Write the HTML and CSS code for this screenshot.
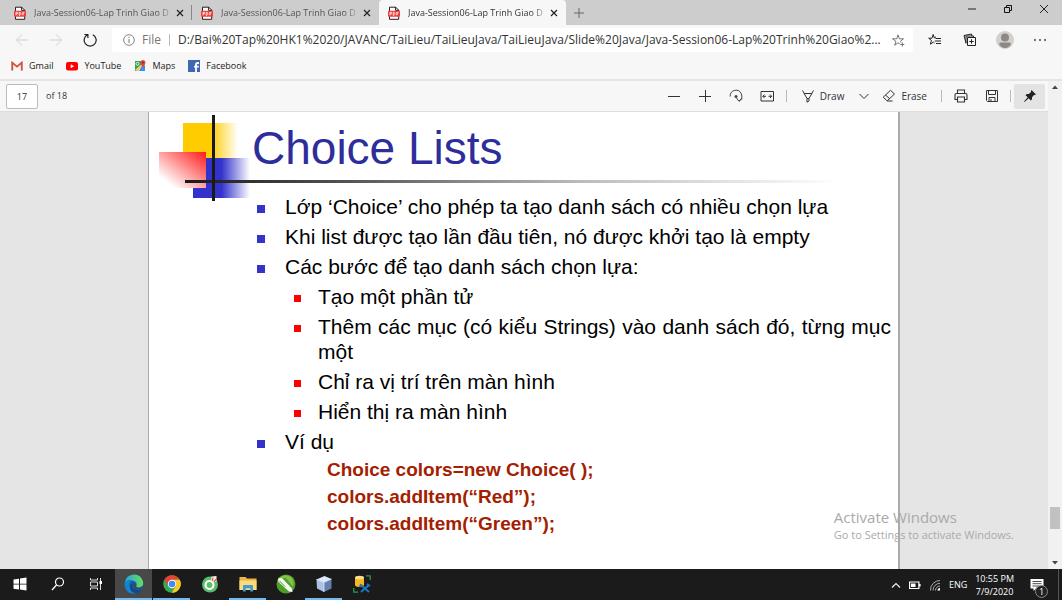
FILE: index.html
```html
<!DOCTYPE html>
<html lang="vi">
<head>
<meta charset="utf-8">
<title>Java-Session06-Lap Trinh Giao D</title>
<link rel="stylesheet" href="styles.css">
</head>
<body>
<svg class="defs" aria-hidden="true">
  <symbol id="pdf" viewBox="0 0 14 14">
    <path d="M2.5 13.3V1.2h6.2l3 3v9.1z" fill="#fff" stroke="#222"/>
    <path d="M8.6 1v3.4H12" fill="none" stroke="#222"/>
    <rect x="1" y="4.8" width="12" height="6" rx="1" fill="#f33b3b"/>
    <path d="M3 9.3v-3h1.4v1.6H3M6.2 6.300v3h.8l.8-.8V7L7 6.300zM9.800 9.300v-3h1.800M9.800 7.900h1.400" fill="none" stroke="#fff" stroke-width=".8"/>
  </symbol>
  <symbol id="close" viewBox="0 0 8 8"><path d="M1 1l6 6M7 1L1 7" fill="none" stroke="currentColor" stroke-width="1.2"/></symbol>
</svg>

<header class="tabstrip">
  <div class="tab"><svg class="i14"><use href="#pdf"/></svg><span class="tab-title">Java-Session06-Lap Trinh Giao D</span><button class="tab-close" aria-label="Close tab"><svg class="i8"><use href="#close"/></svg></button></div>
  <div class="tab"><svg class="i14"><use href="#pdf"/></svg><span class="tab-title">Java-Session06-Lap Trinh Giao D</span><button class="tab-close" aria-label="Close tab"><svg class="i8"><use href="#close"/></svg></button></div>
  <div class="tab active"><svg class="i14"><use href="#pdf"/></svg><span class="tab-title">Java-Session06-Lap Trinh Giao D</span><button class="tab-close" aria-label="Close tab"><svg class="i8"><use href="#close"/></svg></button></div>
  <button class="new-tab" aria-label="New tab"><svg class="i12" viewBox="0 0 12 12"><path d="M6 1v10M1 6h10" stroke="#666"/></svg></button>
  <div class="window-controls">
    <button aria-label="Minimize"><svg class="i10" viewBox="0 0 10 10"><path d="M1 5h8" stroke="#222"/></svg></button>
    <button aria-label="Restore"><svg class="i10" viewBox="0 0 10 10"><path d="M1.500 3.500h5v5h-5zM3.500 3.500v-2h5v5h-2" fill="none" stroke="#111"/></svg></button>
    <button aria-label="Close"><svg class="i10" viewBox="0 0 10 10"><path d="M1 1l8 8M9 1L1 9" stroke="#222"/></svg></button>
  </div>
</header>

<nav class="navbar">
  <button class="nav-btn" aria-label="Back"><svg class="i14" viewBox="0 0 14 14"><path d="M13 7H1.500M7 1.500L1.500 7 7 12.500" fill="none" stroke="#cfcfcf"/></svg></button>
  <button class="nav-btn" aria-label="Forward"><svg class="i14" viewBox="0 0 14 14"><path d="M1 7h11.500M7 1.500L12.500 7 7 12.500" fill="none" stroke="#cfcfcf"/></svg></button>
  <button class="nav-btn" aria-label="Refresh"><svg class="i14" viewBox="0 0 14 14"><path d="M4.500 1.800A6 6 0 1 0 9.800 1.800M4.900 5V1.500H1.400" fill="none" stroke="#222" stroke-width="1.200"/></svg></button>
  <div class="address">
    <svg class="i12" viewBox="0 0 12 12"><circle cx="6" cy="6" r="5.300" fill="none" stroke="#777" stroke-width=".9"/><path d="M6 5v4M6 2.800v1.200" stroke="#777"/></svg>
    <span class="scheme">File</span>
    <input class="url" aria-label="Address" value="D:/Bai%20Tap%20HK1%2020/JAVANC/TaiLieu/TaiLieuJava/TaiLieuJava/Slide%20Java/Java-Session06-Lap%20Trinh%20Giao%2...">
    <button aria-label="Add to favorites"><svg class="i14" viewBox="0 0 14 14"><path d="M8.700 10.800L7 9.800 3.700 12.300 4.900 8.300 1.500 5.800h4.200L7 1.800l1.300 4h4.200L9.500 8.200l.5 1.300M9.300 11.500h4M11.300 9.500v4" fill="none" stroke="#666" stroke-width=".9"/></svg></button>
  </div>
  <div class="nav-right">
    <button aria-label="Favorites"><svg class="i14" viewBox="0 0 14 14"><path d="M8 3.800L6.300 5 5.200 1.500 3.900 5.200H.7l2.700 2.200-1 3.800 3-2.100 1.100.9M7.500 5.500H13M6.800 8H13M8 10.500h5" fill="none" stroke="#222" stroke-width="1"/></svg></button>
    <button aria-label="Collections"><svg class="i14" viewBox="0 0 14 14"><path d="M4.500 4.500h8v8h-8zM8.500 6.300v4.400M6.300 8.500h4.400M3 10L1 2.500 8.500 1l.5 2M3 10.500V3h7.500v1" fill="none" stroke="#222"/></svg></button>
    <button aria-label="Profile"><svg class="i18" viewBox="0 0 18 18"><circle cx="9" cy="9" r="9" fill="#d2cfcc"/><circle cx="9" cy="6.500" r="4" fill="#8c8985"/><path d="M3 13q0-1.500 2-1.500h8q2 0 2 1.500-2 4-6 4t-6-4" fill="#8c8985"/></svg></button>
    <button aria-label="Settings and more"><svg class="i14" viewBox="0 0 14 14"><g fill="#333"><circle cx="2" cy="7" r=".9"/><circle cx="7" cy="7" r=".9"/><circle cx="12" cy="7" r=".9"/></g></svg></button>
  </div>
</nav>

<nav class="bookmarks">
  <a href="#"><svg class="i12" viewBox="0 0 12 12"><path d="M.5 2v8.500H3V2z M9 2v8.500h2.500V2z" fill="#e8e4e2"/><path d="M1.200 10.500V2.600L6 6.600l4.800-4v7.900" fill="none" stroke="#d54b3d" stroke-width="1.700"/></svg>Gmail</a>
  <a href="#"><svg class="i12" viewBox="0 0 12 12"><rect y="2" width="12" height="8.500" rx="2" fill="#f00"/><path d="M4.700 4.300v4l3.400-2z" fill="#fff"/></svg>YouTube</a>
  <a href="#"><svg class="i12" viewBox="0 0 12 12"><path d="M1 1h6l4 5v5H1z" fill="#35a15b"/><path d="M1 10L10 2v3L3 11z" fill="#f7d44c"/><path d="M3 11l4-4 4 4z" fill="#dedede"/><path d="M5 11h6V8L8 6z" fill="#4a8af4"/><circle cx="3.500" cy="3.800" r="1.500" fill="none" stroke="#fff" stroke-width=".8"/><path d="M9 7Q6.400 4.500 6.500 2.500a2.500 2.500 0 0 1 5 0Q11.500 4.500 9 7" fill="#e8453c"/><circle cx="9" cy="2.500" r=".9" fill="#812720"/></svg>Maps</a>
  <a href="#"><svg class="i12" viewBox="0 0 12 12"><rect width="12" height="12" fill="#4267b2"/><path d="M8 12V4.500q0-1.500 1.500-1.500H11M6 6.700h4.700" fill="none" stroke="#fff" stroke-width="1.800"/></svg>Facebook</a>
</nav>

<div class="workspace">
  <div class="viewer">
    <div class="pdfbar">
      <input id="page" class="page-no" value="17" aria-label="Page number"><label for="page">of 18</label>
      <div class="pdf-tools">
        <button class="tool" aria-label="Zoom out"><svg class="i12" viewBox="0 0 12 12"><path d="M0 6.500h12" stroke="#333"/></svg></button>
        <button class="tool" aria-label="Zoom in"><svg class="i12" viewBox="0 0 12 12"><path d="M0 6.500h12M6.500 0v12" stroke="#333"/></svg></button>
        <button class="tool" aria-label="Rotate"><svg class="i14" viewBox="0 0 14 14"><path d="M1.200 7.500A5.800 5.800 0 1 1 10 12M13.300 9.500L10 12.300 7.500 9" fill="none" stroke="#444"/><circle cx="7" cy="7.500" r="1.500" fill="#444"/></svg></button>
        <button class="tool" aria-label="Fit to width"><svg class="i14" viewBox="0 0 14 14"><path d="M1 2.500h12.500v9.500H1zM3 7.300h3M8.500 7.300h3M4.500 5.500L2.800 7.300l1.700 1.700M10 5.500l1.700 1.800L10 9" fill="none" stroke="#333"/></svg></button>
        <span class="sep"></span>
        <button class="labelled draw"><svg class="i14" viewBox="0 0 14 14"><path d="M1.500 1.500L6 9.500v3.700L8 12V9.500l4.500-8M3 4.500h8M6 9.500h2" fill="none" stroke="#333"/></svg>Draw</button>
        <button class="more" aria-label="Draw options"><svg class="i10" viewBox="0 0 10 10"><path d="M.5 3L5 7.500 9.500 3" fill="none" stroke="#333"/></svg></button>
        <button class="labelled"><svg class="i14" viewBox="0 0 14 14"><path d="M4.800 11.500L1.200 8.200 8.500 1.300l4 3.700-7 6.500zM3.500 6L8 10M5 12h5.500" fill="none" stroke="#333"/></svg>Erase</button>
        <span class="sep"></span>
        <button class="tool" aria-label="Print"><svg class="i14" viewBox="0 0 14 14"><path d="M3.500 4.500V1h7v3.500M3.500 10.500H1V6q0-1.500 1.500-1.500h9Q13 4.500 13 6v4.500h-2.500M3.500 8h7v5h-7z" fill="none" stroke="#333" stroke-width="1.100"/></svg></button>
        <button class="tool" aria-label="Save"><svg class="i14" viewBox="0 0 14 14"><path d="M1.500 1.500h11v11h-10l-1-1zM3.500 1.500v4h7v-4M4 12.500v-4h6v4M6 10v2.500" fill="none" stroke="#333"/></svg></button>
        <span class="sep"></span>
        <button class="tool pinned" aria-label="Unpin toolbar"><svg class="i14" viewBox="0 0 14 14"><path d="M8.500 1l4.500 4.500-1.200.6-.8-.1-2 2.200v2L7.800 11.500 5.700 9.300 1.500 13l-.5-.5L4.700 8.300 2.500 6.200 3.800 5h2l2.300-2-.2-1z" fill="#222"/></svg></button>
      </div>
    </div>
    <main class="canvas">
      <article class="slide">
        <header class="slide-head">
          <svg class="slide-art" viewBox="0 0 700 90" aria-hidden="true">
            <defs>
              <linearGradient id="gy"><stop offset=".5" stop-color="#fc0"/><stop offset="1" stop-color="#fc0" stop-opacity="0"/></linearGradient>
              <linearGradient id="gb"><stop offset=".5" stop-color="#33c"/><stop offset="1" stop-color="#33c" stop-opacity="0"/></linearGradient>
              <linearGradient id="gr" gradientUnits="userSpaceOnUse" x1="47" y1="40" x2="18" y2="78"><stop offset="0" stop-color="#ff1a1a"/><stop offset="1" stop-color="#fff"/></linearGradient>
              <linearGradient id="gl"><stop offset="0" stop-color="#1a1a1a"/><stop offset=".25" stop-color="#555"/><stop offset=".6" stop-color="#bbb"/><stop offset="1" stop-color="#fff"/></linearGradient>
            </defs>
            <rect x="24" y="11" width="55" height="36" fill="url(#gy)"/>
            <rect x="34" y="46" width="57" height="40" fill="url(#gb)"/>
            <rect x="0" y="40" width="47" height="36" fill="url(#gr)"/>
            <rect x="26" y="68" width="655" height="3" fill="url(#gl)"/>
            <rect x="53" y="3" width="3" height="86" fill="#1a1a1a"/>
          </svg>
          <h1>Choice Lists</h1>
        </header>
        <ul class="points">
          <li>Lớp ‘Choice’ cho phép ta tạo danh sách có nhiều chọn lựa</li>
          <li>Khi list được tạo lần đầu tiên, nó được khởi tạo là empty</li>
          <li>Các bước để tạo danh sách chọn lựa:
            <ul>
              <li>Tạo một phần tử</li>
              <li>Thêm các mục (có kiểu Strings) vào danh sách đó, từng mục một</li>
              <li>Chỉ ra vị trí trên màn hình</li>
              <li>Hiển thị ra màn hình</li>
            </ul>
          </li>
          <li>Ví dụ
            <div class="code">Choice colors=new Choice( );<br>colors.addItem(“Red”);<br>colors.addItem(“Green”);</div>
          </li>
        </ul>
      </article>
    </main>
  </div>
  <div class="scrollbar">
    <svg class="i8" viewBox="0 0 8 8"><path d="M1 6l3-3.500L7 6z" fill="#444"/></svg>
    <span class="thumb"></span>
    <svg class="i8" viewBox="0 0 8 8"><path d="M1 2l3 3.500L7 2z" fill="#444"/></svg>
  </div>
  <aside class="activate"><strong>Activate Windows</strong><span>Go to Settings to activate Windows.</span></aside>
</div>

<footer class="taskbar">
  <div class="apps">
    <button class="app" aria-label="Start"><svg class="i14" viewBox="0 0 14 14"><path d="M.5 2.500l5.500-.8v5H.5zM7 1.500L13.500.500v6.200H7zM.5 7.500H6v5l-5.500-.8zM7 7.500h6.500v6L7 12.600z" fill="#fff"/></svg></button>
    <button class="app" aria-label="Search"><svg class="i14" viewBox="0 0 14 14"><circle cx="8.500" cy="5" r="4" fill="none" stroke="#fff" stroke-width="1.200"/><path d="M5.500 8L1 13" stroke="#fff" stroke-width="1.300"/></svg></button>
    <button class="app" aria-label="Task view"><svg class="i14" viewBox="0 0 14 14"><path d="M1.500 1v2h7V1M1.500 5h7v4h-7zM1.500 13v-2h7v2M11.500 1v12" fill="none" stroke="#ddd"/><path d="M10.500 4h2.500v3h-2.500z" fill="#fff"/></svg></button>
    <button class="app current running" aria-label="Edge"><svg class="i20" viewBox="0 0 20 20"><defs><linearGradient id="e1" x1="0" x2="1"><stop stop-color="#2aa5e0"/><stop offset="1" stop-color="#67de5a"/></linearGradient></defs><circle cx="10" cy="10" r="9.500" fill="#0f5fb5"/><path d="M.7 9Q2 .8 10 .5q7 0 9 7 1 5-3.500 6-3 .3-3.300-1Q14 8 9 6.500 4 6 .7 9" fill="url(#e1)"/><path d="M.5 10q2-5 7.500-4-4 3-2 7.500 2 4.500 7 5.500-8 2-11-3.500Q.6 13 .5 10" fill="#1384cf"/><path d="M9 9q-2 3 1 6 4 2.300 8-.5-2 4.500-6 5-5-1-6-5-.5-4 3-5.500" fill="#114a8b"/><path d="M9.500 9q-2 3 1.500 5.500 3.500 1.500 7.500-.5 1.500-2-.7-1.200-3.500 1.700-5.800 0-.6-.6.300-1.800 0-1.500-2.800-2" fill="#484848"/></svg></button>
    <button class="app running" aria-label="Chrome"><svg class="i18" viewBox="0 0 18 18"><circle cx="9" cy="9" r="8.800" fill="#36a852"/><path d="M1.300 4.800A8.800 8.800 0 0 1 16.700 4.800H9L5.500 11z" fill="#e54335"/><path d="M9 4.800h7.700A8.800 8.800 0 0 1 8.700 17.800L12.800 11z" fill="#fbc926"/><circle cx="9" cy="9" r="4.200" fill="#fff"/><circle cx="9" cy="9" r="3.300" fill="#4688f1"/></svg></button>
    <button class="app" aria-label="Coc Coc"><svg class="i18" viewBox="0 0 18 18"><circle cx="9" cy="9.500" r="8" fill="#58bd68"/><circle cx="8.500" cy="10" r="4" fill="none" stroke="#fff" stroke-width="2.200"/><circle cx="8.500" cy="10" r="1.800" fill="#58bd68"/><path d="M10 6.500L10.500 1.500l5-.5v5.500L12 8z" fill="#f4f5ef"/><path d="M11.300 6l.7-3.500M12.700 7l2.800-3" stroke="#e8533f" stroke-width="1.200"/></svg></button>
    <button class="app running" aria-label="File Explorer"><svg class="i18" viewBox="0 0 18 18"><path d="M.5 2h6l1.500 1.500h9.500V15H.5z" fill="#e8b64c"/><path d="M.5 5.500h17V15H.5z" fill="#ffda79"/><path d="M4 16.500v-5.500q0-1 1-1h8q1 0 1 1v5.500h-2.700v-3.300H6.700v3.300z" fill="#3b9bdc"/></svg></button>
    <button class="app" aria-label="CorelDRAW"><svg class="i20" viewBox="0 0 20 20"><circle cx="10" cy="10" r="9.500" fill="#4f9e2b"/><path d="M3 4Q9-1 15 3q4 4 2 10L10 4z" fill="#83c244"/><path d="M2 4.500l4-.5 10 10.500.5 3.500-3.500-.5L2.500 8z" fill="#f5f8ef"/><path d="M3.500 7L9 12.500" stroke="#4e9529" stroke-width="1"/></svg></button>
    <button class="app running" aria-label="NetBeans"><svg class="i18" viewBox="0 0 18 18"><path d="M1.500 4.500L9.500 1l7 3-7.500 3.500z" fill="#dce9fa"/><path d="M1.500 4.500L9 7.500V17l-7-3.500z" fill="#a8c1e6"/><path d="M9 7.500L16.500 4v9.500L9 17z" fill="#637fac"/><path d="M1.500 4.500L9 7.500l7.500-3.500M9 7.500V17" fill="none" stroke="#eef5ff" stroke-width=".7"/></svg></button>
    <button class="app" aria-label="Database tools"><svg class="i18" viewBox="0 0 18 18"><path d="M2 2.500v8q3.500 3 9 0v-8z" fill="#f7b526"/><ellipse cx="6.500" cy="2.500" rx="4.500" ry="1.800" fill="#ffe28a"/><path d="M13 .8h4.200V5M.8 13v4.200H5" fill="none" stroke="#2b9a48" stroke-width="1.300"/><path d="M8 10l8 7M16 10l-8 7M14 9l3 2M8 9l-1 3" stroke="#1c76bd" stroke-width="2"/></svg></button>
  </div>
  <div class="tray">
    <svg class="i10" viewBox="0 0 10 10"><path d="M1 7.500l4-4 4 4" fill="none" stroke="#eee" stroke-width="1.200"/></svg>
    <svg class="i12" viewBox="0 0 12 12"><path d="M.6 3h9.300v6.500H.6zM11 5v2.500" fill="none" stroke="#fff" stroke-width="1.200"/><path d="M2 4.500h4.500V8H2z" fill="#fff"/></svg>
    <svg class="i12" viewBox="0 0 12 12"><path d="M1.500 11.500A9.500 9.500 0 0 1 11 1.500M4 11.500A7 7 0 0 1 11 4.300M6.500 11.500A4.500 4.500 0 0 1 11 7" fill="none" stroke="#aaa"/><path d="M8.500 11.500A2.500 2.500 0 0 1 11 9v2.500z" fill="#fff"/></svg>
    <span>ENG</span>
    <time class="clock"><span>10:55 PM</span><span>7/9/2020</span></time>
    <button class="notes" aria-label="1 notification"><svg class="i14" viewBox="0 0 14 14"><path d="M.5 1h13v9.500H6L3.500 13v-2.500h-3z" fill="#fff"/><path d="M2.500 3.500h9M2.500 5.700h9M2.500 8H9" stroke="#333" stroke-width=".9"/></svg><span class="badge">1</span></button>
  </div>
</footer>
</body>
</html>
```
FILE: styles.css
```css
* { box-sizing: border-box; }
body {
  margin: 0;
  height: 100vh;
  display: flex;
  flex-direction: column;
  overflow: hidden;
  font: 9px/12px "Open Sans", "Noto Sans", sans-serif;
  color: #333;
  background: #f7f7f7;
}
button {
  display: inline-flex;
  align-items: center;
  justify-content: center;
  border: 0;
  padding: 0;
  background: none;
  font: inherit;
  color: inherit;
}
input { border: 0; padding: 0; font: inherit; color: inherit; background: none; }
svg { display: block; flex: none; }
.defs { position: absolute; width: 0; height: 0; }
.i8 { width: 8px; height: 8px; }
.i10 { width: 10px; height: 10px; }
.i12 { width: 12px; height: 12px; }
.i14 { width: 14px; height: 14px; }
.i18 { width: 18px; height: 18px; }
.i20 { width: 20px; height: 20px; }

/* Tabs */
.tabstrip { display: flex; height: 25px; flex: none; padding-left: 5px; background: #cdcdcd; }
.tab { display: flex; align-items: center; flex: 0 1 187px; min-width: 0; padding: 0 7px 0 8px; color: #555; position: relative; }
.tab:first-child::after { content: ""; position: absolute; right: 0; top: 5px; height: 15px; border-right: 1px solid #888; }
.tab.active { background: #f7f7f7; border-radius: 4px 4px 0 0; color: #333; }
.tab-title {
  flex: 1;
  min-width: 0;
  margin-left: 7px;
  overflow: hidden;
  white-space: nowrap;
  -webkit-mask-image: linear-gradient(90deg, #000 88%, transparent);
  mask-image: linear-gradient(90deg, #000 88%, transparent);
}
.tab-close { width: 10px; height: 16px; color: #222; }
.new-tab { width: 25px; }
.window-controls { display: flex; margin-left: auto; height: 18px; }
.window-controls button { width: 36px; }

/* Address row */
.navbar { display: flex; align-items: center; height: 30px; flex: none; padding-left: 5px; }
.nav-btn { width: 34px; height: 24px; }
.address {
  flex: 1;
  display: flex;
  align-items: center;
  height: 24px;
  margin-left: 5px;
  padding: 0 8px 0 11px;
  border-radius: 3px;
  background: #fff;
  font-size: 12px;
  line-height: 16px;
}
.scheme { margin-left: 7px; padding-right: 8px; border-right: 1px solid #bbb; color: #777; line-height: 12px; }
.url { flex: 1; min-width: 0; margin: 0 6px 0 8px; color: #333; text-overflow: ellipsis; }
.nav-right { display: flex; align-items: center; padding-left: 4px; padding-right: 5px; }
.nav-right button { width: 35px; }

.bookmarks { display: flex; align-items: center; gap: 13px; height: 22px; flex: none; padding-left: 11px; }
.bookmarks a { display: flex; align-items: center; gap: 6px; color: #222; text-decoration: none; }

/* Document area */
.workspace { flex: 1; min-height: 0; display: flex; position: relative; margin-top: 2px; border-top: 2px solid #e4e4e4; }
.viewer { flex: 1; min-width: 0; display: flex; flex-direction: column; }
.pdfbar { display: flex; align-items: center; height: 31px; flex: none; padding-left: 6px; border-bottom: 1px solid #ddd; }
.page-no { width: 32px; height: 25px; margin-right: 8px; border: 1px solid #bbb; border-radius: 2px; background: #fff; text-align: center; }
.pdf-tools { display: flex; align-items: center; margin-left: auto; padding-right: 3px; font-size: 10px; }
.tool { width: 31px; height: 25px; }
.pinned { background: #e3e3e3; border-radius: 2px; }
.sep { height: 12px; margin: 0 3px; border-left: 1px solid #bbb; }
.labelled { gap: 5px; padding: 0 11px 0 10px; }
.labelled.draw { padding: 0 11px; }
.more { width: 17px; }

.canvas { flex: 1; min-height: 0; overflow: hidden; background: #e5e5e5; }
.slide {
  max-width: 752px;
  min-height: 100%;
  margin: 0 auto;
  padding: 0 7px 24px 103px;
  border: solid #aaa;
  border-width: 0 2px 0 1px;
  background: #fff;
  color: #000;
  font: 21px/25px "Liberation Sans", Arial, sans-serif;
}
.slide-head { position: relative; height: 82px; padding-top: 10px; }
.slide-art { position: absolute; left: -93px; top: 0; width: 700px; height: 90px; }
.slide h1 { position: relative; margin: 0; color: #2d2d9b; font-size: 46px; line-height: 52px; font-weight: 400; }
.points, .points ul { margin: 0; padding: 0; list-style: none; }
.points li { position: relative; margin-bottom: 5px; padding-left: 33px; text-align: justify; }
.points > li::before, .points ul li::before { content: ""; position: absolute; left: 5px; top: 11px; width: 8px; height: 8px; background: #33c; }
.points ul { margin-top: 5px; }
.points ul li::before { left: 9px; width: 7px; height: 7px; background: #f00; }
.code { margin-top: 2px; padding-left: 42px; color: #a32000; font-weight: 700; font-size: 19px; line-height: 27px; }

.scrollbar { width: 14px; display: flex; flex-direction: column; align-items: center; padding: 2px 0; background: #f1f1f1; }
.thumb { width: 10px; height: 22px; margin: auto 0 30px; background: #c1c1c1; }

.activate { position: absolute; right: 48px; bottom: 26px; display: flex; flex-direction: column; color: #aaa; font-size: 11px; line-height: 16px; }
.activate strong { font-size: 15px; line-height: 20px; font-weight: 400; }

/* Taskbar */
.taskbar { display: flex; height: 31px; flex: none; background: #1b1b1b; color: #fff; }
.apps { display: flex; gap: 1px; padding-left: 1px; }
.app { width: 37px; border-bottom: 2px solid transparent; }
.running { border-bottom-color: #76b9ed; }
.current { background: #484848; }
.tray { display: flex; align-items: center; gap: 8px; margin-left: auto; padding-right: 3px; }
.clock { display: flex; flex-direction: column; align-items: center; line-height: 13px; }
.notes { position: relative; width: 37px; height: 31px; padding-right: 6px; border-right: 1px solid #555; }
.badge { position: absolute; right: 10px; bottom: 2px; width: 13px; height: 13px; border: 1px solid #888; border-radius: 50%; background: #222; line-height: 11px; }
```
